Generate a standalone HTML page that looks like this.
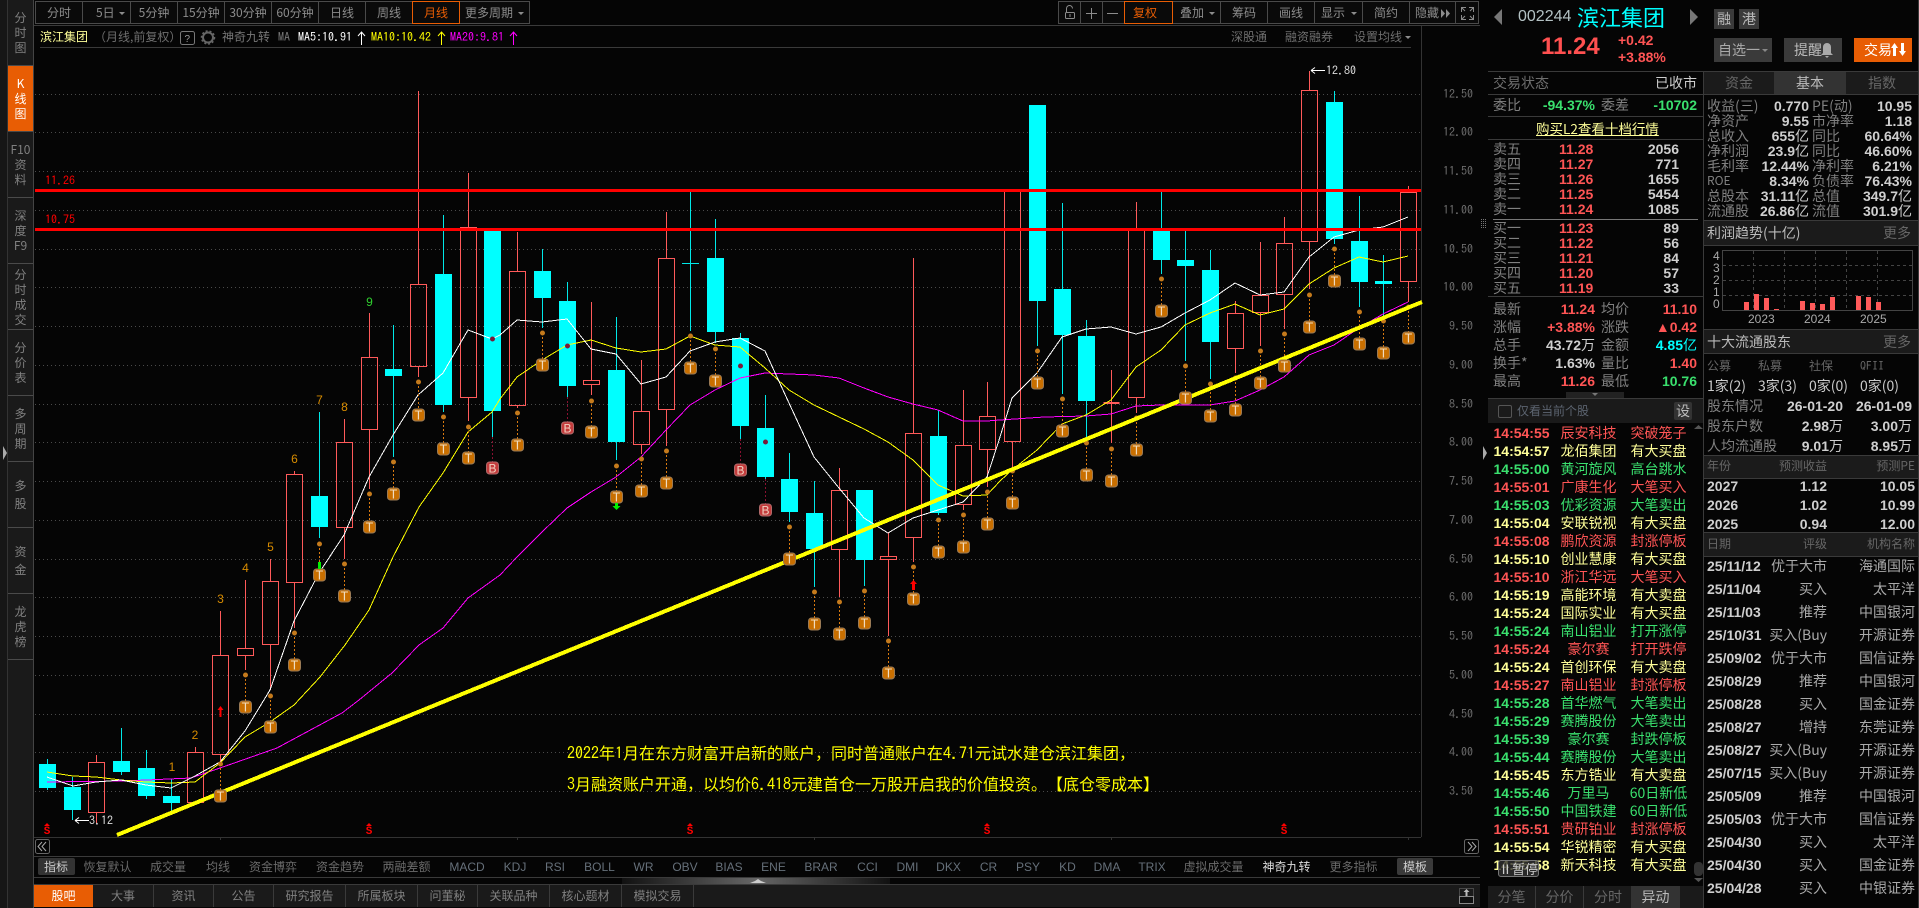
<!DOCTYPE html>
<html lang="zh"><head><meta charset="utf-8"><title>滨江集团</title>
<style>
html,body{margin:0;padding:0;background:#050505;width:1919px;height:908px;overflow:hidden}
body{position:relative;font-family:"WenQuanYi Zen Hei","Noto Sans CJK SC",sans-serif;font-size:14px;color:#808080;text-spacing-trim:space-all}
div{box-sizing:border-box}
.t{position:absolute;height:16px;line-height:16px;white-space:nowrap}
.box{position:absolute}
.b{position:absolute;top:1px;height:23px;border:1px solid #4a4a4a;font-size:12px;line-height:21px;text-align:center;color:#8c8c8c;white-space:nowrap;background:#0a0a0a}
.o{border-color:#e85d04;color:#e85d04}
.h{position:absolute;background:#3a3a3a;height:1px}
.v{position:absolute;background:#3a3a3a;width:1px}
.s{font-size:12px}
.ip{font-family:"IPAGothic","Liberation Mono",monospace}
.n{font-family:"Liberation Sans","WenQuanYi Zen Hei",sans-serif;font-weight:bold;font-size:14px;color:#cfcfcf}
.n i{font-style:normal;font-weight:normal;font-family:"WenQuanYi Zen Hei","Noto Sans CJK SC",sans-serif}
.a{font-family:"IPAGothic","Liberation Mono",monospace;font-size:12px;color:#6e6e6e;right:446px}
.R{color:#ff5555}.Y{color:#ffff99}.G{color:#3ae06e}
.lt{position:absolute;left:8px;width:25px;background:#1a1a1a;border-bottom:1px solid #4a4a4a;text-align:center;font-size:12px;line-height:15px;color:#808080;display:flex;flex-direction:column;justify-content:center}
.sec{position:absolute;left:1704px;width:214px;background:#1b1b1b}
.bt{position:absolute;top:885px;height:22px;background:#1a1a1a;border-right:1px solid #3a3a3a;font-size:12px;line-height:22px;text-align:center;color:#808080}
.id{position:absolute;top:859px;height:16px;line-height:16px;font-size:12px;color:#6a6a6a;transform:translateX(-50%);white-space:nowrap}
.en{font-family:"Liberation Sans",sans-serif;color:#66707a}
.r{position:relative;height:18px;line-height:18px;white-space:nowrap}
.r b{position:absolute;left:5.5px;font:bold 14px/18px "Liberation Sans",sans-serif}
.r span{position:absolute;left:60px;width:81px;text-align:center}
.r em{position:absolute;left:130px;width:81px;text-align:center;font-style:normal}
</style></head><body>

<!-- left strip -->
<div class="box" style="left:0;top:0;width:8px;height:908px;background:#161616;border-right:1px solid #333"></div>
<div class="lt" style="top:0;height:66px">分<br>时<br>图</div>
<div class="lt" style="top:66px;height:66px;background:#e85d04;color:#fff">K<br>线<br>图</div>
<div class="lt" style="top:132px;height:66px">F10<br>资<br>料</div>
<div class="lt" style="top:198px;height:66px">深<br>度<br>F9</div>
<div class="lt" style="top:264px;height:66px">分<br>时<br>成<br>交</div>
<div class="lt" style="top:330px;height:66px">分<br>价<br>表</div>
<div class="lt" style="top:396px;height:66px">多<br>周<br>期</div>
<div class="lt" style="top:462px;height:66px;line-height:18px">多<br>股</div>
<div class="lt" style="top:528px;height:66px;line-height:18px">资<br>金</div>
<div class="lt" style="top:594px;height:66px">龙<br>虎<br>榜</div>
<div class="box" style="left:8px;top:660px;width:25px;height:248px;background:#1a1a1a"></div>
<div class="v" style="left:33px;top:0;height:908px;background:#444"></div>

<!-- top bar -->
<div class="b" style="left:35px;width:48px">分时</div>
<div class="b" style="left:82px;width:49px;text-align:left;padding-left:13px">5日</div>
<div class="b" style="left:130px;width:48px">5分钟</div>
<div class="b" style="left:177px;width:48px">15分钟</div>
<div class="b" style="left:224px;width:48px">30分钟</div>
<div class="b" style="left:271px;width:48px">60分钟</div>
<div class="b" style="left:318px;width:48px">日线</div>
<div class="b" style="left:365px;width:48px">周线</div>
<div class="b o" style="left:412px;width:48px;z-index:2">月线</div>
<div class="b" style="left:459px;width:71px;text-align:left;padding-left:5px">更多周期</div>
<div class="b" style="left:1058px;width:23px"></div>
<div class="b" style="left:1080px;width:23px"></div>
<div class="b" style="left:1102px;width:23px"></div>
<div class="b o" style="left:1124px;width:49px;text-align:left;padding-left:8px;z-index:2">复权</div>
<div class="b" style="left:1172px;width:49px;text-align:left;padding-left:7px">叠加</div>
<div class="b" style="left:1220px;width:48px">筹码</div>
<div class="b" style="left:1267px;width:48px">画线</div>
<div class="b" style="left:1314px;width:49px;text-align:left;padding-left:6px">显示</div>
<div class="b" style="left:1362px;width:48px">简约</div>
<div class="b" style="left:1409px;width:47px;text-align:left;padding-left:5px">隐藏</div>
<div class="b" style="left:1455px;width:24px"></div>
<div class="h" style="left:34px;top:25px;width:1446px"></div>

<!-- title row -->
<div class="t s Y" style="left:40px;top:29px">滨江集团</div>
<div class="t s" style="left:94px;top:29px;color:#6e6e6e">（月线,前复权）</div>
<div class="t s" style="left:222px;top:29px;color:#777">神奇九转</div>
<div class="t s ip" style="left:278px;top:29px;color:#777">MA</div>
<div class="t s ip" style="left:298px;top:29px;color:#fff">MA5:10.91</div>
<div class="t s ip" style="left:371px;top:29px;color:#ff0">MA10:10.42</div>
<div class="t s ip" style="left:450px;top:29px;color:#f0f">MA20:9.81</div>
<div class="t s" style="left:1231px;top:29px;color:#6e6e6e">深股通</div>
<div class="t s" style="left:1285px;top:29px;color:#6e6e6e">融资融券</div>
<div class="t s" style="left:1354px;top:29px;color:#6e6e6e">设置均线</div>
<div class="h" style="left:40px;top:47px;width:1371px"></div>

<!-- chart -->
<svg style="position:absolute;left:0;top:0" width="1919" height="908" viewBox="0 0 1919 908" xmlns="http://www.w3.org/2000/svg">
<defs>
<g id="tb"><rect x="-6" y="-6" width="12" height="12" rx="3" fill="#c96f00" stroke="#9a7a55" stroke-width="1"/></g>
<g id="bb"><rect x="-6" y="-6" width="12" height="12" rx="3" fill="#c43c3c" stroke="#b06a6a" stroke-width="1"/></g>
</defs>
<!-- grid -->
<path fill="none" stroke="#4a4a4a" stroke-width="1" stroke-dasharray="1 3" d="M35 94.5H1421M35 132.5H1421M35 171.5H1421M35 210.5H1421M35 249.5H1421M35 287.5H1421M35 326.5H1421M35 365.5H1421M35 404.5H1421M35 442.5H1421M35 481.5H1421M35 520.5H1421M35 559.5H1421M35 597.5H1421M35 636.5H1421M35 675.5H1421M35 714.5H1421M35 752.5H1421M35 791.5H1421"/>
<path fill="none" stroke="#333" d="M1421.5 26V837M34 837.5H1421M220.5 837v3M517.5 837v3M814.5 837v3M1111.5 837v3M1408.5 837v3"/>
<!-- cyan candles -->
<path stroke="#00e8e8" stroke-width="1" fill="none" d="M47.5 759V790M72.5 777V820M121.5 728V775M146.5 750V799M171.5 779V813M319.5 412V538M393.5 325V457M443.5 215V412M492.5 230V437M542.5 249V328M567.5 282V397M616.5 317V460M690.5 192V331M682 263.5H699M715.5 219V343M740.5 333V439M765.5 395V479M789.5 453V522M814.5 481V587M864.5 490V586M938.5 410V515M1037.5 105V346M1062.5 203V394M1086.5 320V438M1161.5 192V274M1185.5 231V361M1210.5 250V379M1334.5 91V244M1359.5 196V307M1383.5 255V316"/>
<path fill="#00ffff" d="M39 764H56V788H39ZM64 787H81V810H64ZM113 761H130V772H113ZM138 768H155V796H138ZM163 796H180V803H163ZM311 496H328V527H311ZM385 369H402V376H385ZM435 274H452V405H435ZM484 230H501V411H484ZM534 271H551V298H534ZM559 301H576V386H559ZM608 370H625V442H608ZM707 258H724V332H707ZM732 338H749V426H732ZM757 428H774V477H757ZM781 479H798V512H781ZM806 513H823V549H806ZM856 490H873V560H856ZM930 436H947V513H930ZM1029 105H1046V301H1029ZM1054 289H1071V335H1054ZM1078 336H1095V401H1078ZM1153 231H1170V260H1153ZM1177 260H1194V266H1177ZM1202 270H1219V342H1202ZM1326 102H1343V239H1326ZM1351 241H1368V282H1351ZM1375 281H1392V284H1375Z"/>
<!-- red candles -->
<path stroke="#ff5a5a" stroke-width="1" fill="none" d="M96.5 755V762.5M88.5 762.5H104.5V812.5H88.5ZM96.5 812.5V823M195.5 747V752.5M187.5 752.5H203.5V802.5H187.5ZM220.5 611V655.5M212.5 655.5H228.5V754.5H212.5ZM220.5 754.5V762M245.5 580V648.5M237.5 648.5H253.5V655.5H237.5ZM245.5 655.5V670M270.5 559V581.5M262.5 581.5H278.5V644.5H262.5ZM270.5 644.5V690M294.5 471V474.5M286.5 474.5H302.5V582.5H286.5ZM294.5 582.5V628M344.5 419V442.5M336.5 442.5H352.5V527.5H336.5ZM344.5 527.5V559M369.5 313V357.5M361.5 357.5H377.5V429.5H361.5ZM369.5 429.5V489M418.5 91V284.5M410.5 284.5H426.5V366.5H410.5ZM418.5 366.5V377M468.5 173V227.5M460.5 227.5H476.5V397.5H460.5ZM468.5 397.5V421M517.5 232V271.5M509.5 271.5H525.5V405.5H509.5ZM517.5 405.5V408M591.5 302V380.5M583.5 380.5H599.5V384.5H583.5ZM591.5 384.5V395M641.5 360V411.5M633.5 411.5H649.5V444.5H633.5ZM641.5 444.5V454M666.5 212V258.5M658.5 258.5H674.5V409.5H658.5ZM666.5 409.5V446M839.5 468V490.5M831.5 490.5H847.5V549.5H831.5ZM839.5 549.5V597M888.5 532V556.5M880.5 556.5H896.5V559.5H880.5ZM888.5 559.5V636M913.5 258V433.5M905.5 433.5H921.5V537.5H905.5ZM913.5 537.5V562M963.5 390V445.5M955.5 445.5H971.5V504.5H955.5ZM963.5 504.5V510M987.5 382V416.5M979.5 416.5H995.5V449.5H979.5ZM987.5 449.5V487M1004.5 191.5H1020.5V441.5H1004.5ZM1012.5 441.5V468M1103.5 402.5H1119.5M1103.5 403.5H1119.5M1111.5 370V443M1128.5 229.5H1144.5V397.5H1128.5ZM1136.5 202V229.5M1136.5 397.5V413M1235.5 301V313.5M1227.5 313.5H1243.5V348.5H1227.5ZM1235.5 348.5V373M1260.5 242V295.5M1252.5 295.5H1268.5V312.5H1252.5ZM1260.5 312.5V346M1284.5 217V243.5M1276.5 243.5H1292.5V294.5H1276.5ZM1284.5 294.5V329M1309.5 71V90.5M1301.5 90.5H1317.5V241.5H1301.5ZM1309.5 241.5V289M1408.5 186V192.5M1400.5 192.5H1416.5V281.5H1400.5ZM1408.5 281.5V302"/>
<!-- MA -->
<polyline shape-rendering="crispEdges" fill="none" stroke="#f0f" stroke-width="1" points="47,782 124,781 191,778 220,768 277,748 342,713 359,700 392,673 419,645 443,628 468,598 500,575 517,557 542,532 567,508 591,492 616,477 641,457 666,430 690,405 715,390 740,378 765,373 789,374 814,375 839,378 864,388 888,397 913,404 938,410 963,421 987,421 1000,420 1044,417 1086,416 1111,414 1136,406 1161,405 1210,405 1235,401 1260,390 1284,377 1309,355 1334,345 1359,328 1383,314 1408,302"/>
<polyline shape-rendering="crispEdges" fill="none" stroke="#ff0" stroke-width="1" points="47,772 73,776 96,777 121,780 146,782 171,783 195,782 220,763 245,737 270,722 294,705 320,677 345,645 369,610 393,557 419,507 443,473 468,432 492,412 500,399 517,377 542,360 567,345 591,340 616,348 641,352 666,349 690,336 715,345 740,347 765,368 789,390 814,405 839,417 864,429 888,442 913,460 938,485 963,496 987,495 1000,481 1012,470 1037,450 1062,424 1086,415 1111,400 1136,367 1161,350 1185,325 1210,313 1235,304 1260,315 1284,309 1309,284 1334,268 1359,257 1383,262 1408,256"/>
<polyline shape-rendering="crispEdges" fill="none" stroke="#fff" stroke-width="1" points="47,777 73,786 96,782 121,780 146,785 171,788 195,776 220,762 245,731 270,690 294,621 319,573 344,535 369,477 393,435 418,395 443,373 468,330 492,339 500,335 517,320 542,322 567,319 591,349 616,354 641,384 666,377 690,351 715,342 740,338 765,351 789,403 814,457 839,488 864,518 888,533 913,518 938,510 963,502 987,477 1000,437 1012,398 1037,373 1062,337 1086,329 1111,327 1136,334 1161,327 1185,313 1210,300 1235,283 1260,295 1284,292 1309,257 1334,237 1359,230 1383,227 1408,217"/>
<!-- dashes -->
<path fill="none" stroke="#d97a10" stroke-width="1" stroke-dasharray="2 2" d="M220.5 764V796M245.5 675V707M270.5 696V727M294.5 633V665M319.5 544V575M344.5 564V596M369.5 494V527M393.5 462V494M418.5 382V415M443.5 417V449M468.5 427V458M517.5 413V445M542.5 333V365M591.5 401V432M616.5 466V497M641.5 459V491M666.5 451V483M690.5 336V368M715.5 349V381M789.5 527V559M814.5 592V624M839.5 602V634M864.5 591V623M888.5 641V673M913.5 567V599M938.5 520V552M963.5 515V547M987.5 492V524M1012.5 471V503M1037.5 351V383M1062.5 399V431M1086.5 443V475M1111.5 449V481M1136.5 418V450M1161.5 279V311M1185.5 366V398M1210.5 384V416M1235.5 378V410M1260.5 351V383M1284.5 334V366M1309.5 295V327M1334.5 249V281M1359.5 312V344M1383.5 321V353M1408.5 307V338"/>
<path fill="none" stroke="#8a1030" stroke-width="1" stroke-dasharray="2 2" d="M492.5 437V468M567.5 397V428M740.5 439V470M765.5 479V510"/>
<path fill="none" stroke="#c47a1c" stroke-width="5" stroke-linecap="round" d="M220.5 764h0M245.5 675h0M270.5 696h0M294.5 633h0M319.5 544h0M344.5 564h0M369.5 494h0M393.5 462h0M418.5 382h0M443.5 417h0M468.5 427h0M517.5 413h0M542.5 333h0M591.5 401h0M616.5 466h0M641.5 459h0M666.5 451h0M690.5 336h0M715.5 349h0M789.5 527h0M814.5 592h0M839.5 602h0M864.5 591h0M888.5 641h0M913.5 567h0M938.5 520h0M963.5 515h0M987.5 492h0M1012.5 471h0M1037.5 351h0M1062.5 399h0M1086.5 443h0M1111.5 449h0M1136.5 418h0M1161.5 279h0M1185.5 366h0M1210.5 384h0M1235.5 378h0M1260.5 351h0M1284.5 334h0M1309.5 295h0M1334.5 249h0M1359.5 312h0M1383.5 321h0M1408.5 307h0"/>
<path fill="none" stroke="#7a1a3a" stroke-width="5" stroke-linecap="round" d="M492.5 339h0M567.5 346h0M740.5 366h0M765.5 442h0"/>
<!-- trend -->
<line shape-rendering="crispEdges" x1="117" y1="835" x2="1422" y2="302" stroke="#ff0" stroke-width="4"/>
<!-- badges -->
<g>
<use href="#tb" x="220.5" y="796"/><use href="#tb" x="245.5" y="707"/><use href="#tb" x="270.5" y="727"/><use href="#tb" x="294.5" y="665"/><use href="#tb" x="319.5" y="575"/><use href="#tb" x="344.5" y="596"/><use href="#tb" x="369.5" y="527"/><use href="#tb" x="393.5" y="494"/><use href="#tb" x="418.5" y="415"/><use href="#tb" x="443.5" y="449"/><use href="#tb" x="468.5" y="458"/><use href="#tb" x="517.5" y="445"/><use href="#tb" x="542.5" y="365"/><use href="#tb" x="591.5" y="432"/><use href="#tb" x="616.5" y="497"/><use href="#tb" x="641.5" y="491"/><use href="#tb" x="666.5" y="483"/><use href="#tb" x="690.5" y="368"/><use href="#tb" x="715.5" y="381"/><use href="#tb" x="789.5" y="559"/><use href="#tb" x="814.5" y="624"/><use href="#tb" x="839.5" y="634"/><use href="#tb" x="864.5" y="623"/><use href="#tb" x="888.5" y="673"/><use href="#tb" x="913.5" y="599"/><use href="#tb" x="938.5" y="552"/><use href="#tb" x="963.5" y="547"/><use href="#tb" x="987.5" y="524"/><use href="#tb" x="1012.5" y="503"/><use href="#tb" x="1037.5" y="383"/><use href="#tb" x="1062.5" y="431"/><use href="#tb" x="1086.5" y="475"/><use href="#tb" x="1111.5" y="481"/><use href="#tb" x="1136.5" y="450"/><use href="#tb" x="1161.5" y="311"/><use href="#tb" x="1185.5" y="398"/><use href="#tb" x="1210.5" y="416"/><use href="#tb" x="1235.5" y="410"/><use href="#tb" x="1260.5" y="383"/><use href="#tb" x="1284.5" y="366"/><use href="#tb" x="1309.5" y="327"/><use href="#tb" x="1334.5" y="281"/><use href="#tb" x="1359.5" y="344"/><use href="#tb" x="1383.5" y="353"/><use href="#tb" x="1408.5" y="338"/>
<use href="#bb" x="492.5" y="468"/><use href="#bb" x="567.5" y="428"/><use href="#bb" x="740.5" y="470"/><use href="#bb" x="765.5" y="510"/>
</g>
<text transform="translate(0 .5)" font-family="Liberation Sans,sans-serif" font-size="12.5" fill="#f0dcc0" text-anchor="middle" x="220.5 245.5 270.5 294.5 319.5 344.5 369.5 393.5 418.5 443.5 468.5 517.5 542.5 591.5 616.5 641.5 666.5 690.5 715.5 789.5 814.5 839.5 864.5 888.5 913.5 938.5 963.5 987.5 1012.5 1037.5 1062.5 1086.5 1111.5 1136.5 1161.5 1185.5 1210.5 1235.5 1260.5 1284.5 1309.5 1334.5 1359.5 1383.5 1408.5" y="800 711 731 669 579 600 531 498 419 453 462 449 369 436 501 495 487 372 385 563 628 638 627 677 603 556 551 528 507 387 435 479 485 454 315 402 420 414 387 370 331 285 348 357 342">TTTTTTTTTTTTTTTTTTTTTTTTTTTTTTTTTTTTTTTTTTTTT</text>
<text transform="translate(0 .5)" font-family="Liberation Sans,sans-serif" font-size="12" fill="#f0d0c0" text-anchor="middle" x="492.5 567.5 740.5 765.5" y="472 432 474 514">BBBB</text>
<!-- arrows -->
<path fill="#f00" d="M220.5 706l-3 4h2v7h2v-7h2zM913.5 580l-3.5 4h2v6h3v-6h2z"/>
<path fill="#0e0" d="M318 562h3v7h-3zM615 503h3v3h2.5l-4 4-4-4h2.5z"/>
<!-- red levels -->
<rect x="35" y="189" width="1386" height="3" fill="#f00"/>
<rect x="35" y="228" width="1386" height="3" fill="#f00"/>
<!-- s marks -->
<path fill="#f00" d="M47 823l-3 3h6zM369 823l-3 3h6zM690 823l-3 3h6zM987 823l-3 3h6zM1284 823l-3 3h6z"/>
<g font-family="Liberation Mono,monospace" font-size="11" font-weight="bold" fill="#f00" text-anchor="middle">
<text x="47" y="834">S</text><text x="369" y="834">S</text><text x="690" y="834">S</text><text x="987" y="834">S</text><text x="1284" y="834">S</text>
</g>
<!-- count labels -->
<g font-family="Liberation Sans,sans-serif" font-size="12" fill="#d88c00" text-anchor="middle">
<text x="172" y="771">1</text><text x="195" y="739">2</text><text x="220.5" y="603">3</text><text x="245.5" y="572">4</text><text x="270.5" y="551">5</text><text x="294.5" y="463">6</text><text x="319.5" y="404">7</text><text x="344.5" y="411">8</text><text x="369.5" y="306" fill="#2fd02f">9</text>
</g>
<!-- high low marks -->
<path fill="none" stroke="#fff" d="M1311 70.5H1325M1311 70.5l4-3M1311 70.5l4 3M75 820.5H89M75 820.5l4-3M75 820.5l4 3"/>
<text font-family="IPAGothic,monospace" font-size="12" fill="#ddd" x="1326" y="74.5">12.80</text>
<text font-family="IPAGothic,monospace" font-size="12" fill="#ddd" x="89" y="824.5">3.12</text>
<text font-family="IPAGothic,monospace" font-size="12" fill="#f00" x="45" y="184.5">11.26</text>
<text font-family="IPAGothic,monospace" font-size="12" fill="#f00" x="45" y="223.5">10.75</text>
<!-- MA arrows -->
<path fill="none" stroke="#fff" d="M361.5 32V45M358 36l3.5-4 3.5 4"/>
<path fill="none" stroke="#ff0" d="M441.5 32V45M438 36l3.5-4 3.5 4"/>
<path fill="none" stroke="#f0f" d="M513.5 32V45M510 36l3.5-4 3.5 4"/>
<!-- question + gear -->
<rect x="180.5" y="31.5" width="14" height="13" rx="2" fill="none" stroke="#777"/>
<text font-family="Liberation Sans,sans-serif" font-size="10" fill="#999" x="184.5" y="42">?</text>
<circle cx="208" cy="37.5" r="5" fill="none" stroke="#666" stroke-width="2"/><circle cx="208" cy="37.5" r="6.5" fill="none" stroke="#666" stroke-width="1.5" stroke-dasharray="2 2"/>
<!-- toolbar icons -->
<g fill="none" stroke="#8c8c8c">
<rect x="1065.5" y="12.5" width="9" height="6" rx="1"/><path d="M1066.5 12V8.5a3 3 0 0 1 6 0M1070 14v3"/>
<path d="M1091.5 8V19M1086 13.5H1097M1107 13.5H1118"/>
<path d="M1461.5 12V7.5H1466M1469 7.5H1473.5V12M1461.5 15V19.5H1466M1469 19.5H1473.5V15M1462 8l3 3M1473 8l-3 3M1462 19l3-3M1473 19l-3-3"/>
</g>
<path fill="#8c8c8c" d="M1441 9l4 4.5-4 4.5zM1446 9l4 4.5-4 4.5zM119 12h6l-3 3zM518 12h6l-3 3zM1405 36h6l-3 3z"/>
<path fill="#e85d04" d="M1161 12h6l-3 3z"/>
<path fill="#8c8c8c" d="M1209 12h6l-3 3zM1351 12h6l-3 3z"/>
<!-- side handles -->
<path fill="#aaa" d="M3 446l4 7-4 7zM1483 446l4 7-4 7z"/>
<path stroke="#777" stroke-width="1" stroke-dasharray="1 1" d="M1481.5 219v10M1483.5 219v10M1485.5 219v10"/>
<!-- bottom nav -->
<rect x="35.5" y="839.5" width="14" height="14" rx="2" fill="none" stroke="#666"/>
<path fill="none" stroke="#aaa" d="M42 842l-4 4.5 4 4.5M46 842l-4 4.5 4 4.5"/>
<rect x="1464.5" y="839.5" width="14" height="14" rx="2" fill="none" stroke="#666"/>
<path fill="none" stroke="#aaa" d="M1468 842l4 4.5-4 4.5M1472 842l4 4.5-4 4.5"/>
<!-- scroll + corner -->
<defs><linearGradient id="g" x1="0" x2="1"><stop offset="0" stop-color="#111"/><stop offset=".5" stop-color="#666"/><stop offset="1" stop-color="#111"/></linearGradient></defs>
<rect x="622" y="878" width="268" height="6" fill="url(#g)"/>
<path fill="#ccc" d="M750 883l5-2 3-2 3 2 5 2z"/>
<!-- profit chart -->
<rect x="1722.5" y="250.5" width="190" height="60" fill="none" stroke="#444"/>
<path fill="none" stroke="#444" stroke-dasharray="3 3" d="M1723 265.5H1912M1723 280.5H1912M1723 295.5H1912M1753.5 251V310M1784.5 251V310M1815.5 251V310M1846.5 251V310M1877.5 251V310"/>
<path fill="#ff5a5a" d="M1744 302h5v8h-5zM1754 294h5v16h-5zM1764 298h5v12h-5zM1774 309h5v1h-5zM1800 301h5v9h-5zM1810 303h5v7h-5zM1820 304h5v6h-5zM1830 297h5v13h-5zM1856 296h5v14h-5zM1866 297h5v13h-5zM1876 302h5v8h-5z"/>
<!-- header arrows -->
<path fill="#777" d="M1502 9v16l-8-8zM1690 9v16l8-8z"/>
<path fill="#555" d="M1694 429h9l-4.5-4zM1694 878h9l-4.5 4z"/>
<path fill="#777" d="M1593 393h6l-3 2.5z"/>
</svg>

<!-- corner icon -->
<div class="box" style="left:34px;top:885px;width:1446px;height:22px;background:#1a1a1a"></div>
<svg style="position:absolute;left:1459px;top:887px" width="16" height="18"><rect x=".5" y="1.5" width="14" height="15" fill="none" stroke="#777" stroke-dasharray="1 1"/><rect x=".5" y="9.5" width="14" height="7" fill="#111" stroke="#888"/><path fill="#bbb" d="M7.500 2l-3 3h2v4h2v-4h2z"/></svg>

<!-- axis labels -->
<div class="t a" style="top:86px">12.50</div><div class="t a" style="top:124px">12.00</div><div class="t a" style="top:163px">11.50</div><div class="t a" style="top:202px">11.00</div><div class="t a" style="top:241px">10.50</div><div class="t a" style="top:279px">10.00</div><div class="t a" style="top:318px">9.50</div><div class="t a" style="top:357px">9.00</div><div class="t a" style="top:396px">8.50</div><div class="t a" style="top:434px">8.00</div><div class="t a" style="top:473px">7.50</div><div class="t a" style="top:512px">7.00</div><div class="t a" style="top:551px">6.50</div><div class="t a" style="top:589px">6.00</div><div class="t a" style="top:628px">5.50</div><div class="t a" style="top:667px">5.00</div><div class="t a" style="top:706px">4.50</div><div class="t a" style="top:744px">4.00</div><div class="t a" style="top:783px">3.50</div>

<!-- annotations -->
<div class="t" style="left:567px;top:744px;font-size:16px;color:#ff0"><span class="ip">2022</span>年<span class="ip">1</span>月在东方财富开启新的账户，同时普通账户在<span class="ip">4.71</span>元试水建仓滨江集团，</div>
<div class="t" style="left:567px;top:775px;font-size:16px;color:#ff0"><span class="ip">3</span>月融资账户开通，以均价<span class="ip">6.418</span>元建首仓一万股开启我的价值投资。【底仓零成本】</div>

<!-- bottom rows -->
<div class="h" style="left:34px;top:856px;width:1446px"></div>
<div class="h" style="left:34px;top:877px;width:1446px"></div>
<div class="h" style="left:34px;top:884px;width:1446px"></div>
<div class="box" style="left:38px;top:858px;width:37px;height:17px;background:#333;border-radius:2px"></div>
<div class="id" style="left:56px;color:#ccc">指标</div>
<div class="id" style="left:107.5px">恢复默认</div><div class="id" style="left:168px">成交量</div><div class="id Y" style="left:218px">均线</div><div class="id" style="left:273px">资金博弈</div><div class="id" style="left:340px">资金趋势</div><div class="id" style="left:406.5px">两融差额</div>
<div class="id en" style="left:467px">MACD</div><div class="id en" style="left:515px">KDJ</div><div class="id en" style="left:555px">RSI</div><div class="id en" style="left:599.5px">BOLL</div><div class="id en" style="left:643.5px">WR</div><div class="id en" style="left:685px">OBV</div><div class="id en" style="left:729px">BIAS</div><div class="id en" style="left:773.5px">ENE</div><div class="id en" style="left:821px">BRAR</div><div class="id en" style="left:867.5px">CCI</div><div class="id en" style="left:907.5px">DMI</div><div class="id en" style="left:948.5px">DKX</div><div class="id en" style="left:988.5px">CR</div><div class="id en" style="left:1028px">PSY</div><div class="id en" style="left:1067.5px">KD</div><div class="id en" style="left:1107px">DMA</div><div class="id en" style="left:1152px">TRIX</div>
<div class="id" style="left:1213.5px">虚拟成交量</div><div class="id" style="left:1286.5px;color:#ddd">神奇九转</div><div class="id" style="left:1353.5px">更多指标</div>
<div class="box" style="left:1397px;top:858px;width:36px;height:17px;background:#3a3a3a;border-radius:2px"></div>
<div class="id" style="left:1415px;color:#ccc">模板</div>

<div class="bt" style="left:34px;width:59px;background:#e85d04;color:#fff;border:0">股吧</div>
<div class="bt" style="left:93px;width:61px">大事</div><div class="bt" style="left:154px;width:60px">资讯</div><div class="bt" style="left:214px;width:60px">公告</div><div class="bt" style="left:274px;width:72px">研究报告</div><div class="bt" style="left:346px;width:72px">所属板块</div><div class="bt" style="left:418px;width:60px">问董秘</div><div class="bt" style="left:478px;width:72px">关联品种</div><div class="bt" style="left:550px;width:72px">核心题材</div><div class="bt" style="left:622px;width:72px">模拟交易</div>

<!-- right strip -->
<div class="box" style="left:1480px;top:0;width:8px;height:908px;background:#161616;border-left:1px solid #333;border-right:1px solid #444;z-index:-1"></div>

<!-- header -->
<div class="t" style="left:1518px;top:9px;font:16px/16px 'Liberation Sans',sans-serif;color:#b4c2c4">002244</div>
<div class="t" style="left:1577px;top:3px;height:28px;line-height:28px;font-size:22px;color:#0ff">滨江集团</div>
<div class="box" style="left:1714px;top:9px;width:20px;height:20px;background:#3a3a3a;color:#bbb;text-align:center;line-height:20px">融</div>
<div class="box" style="left:1739px;top:9px;width:20px;height:20px;background:#3a3a3a;color:#bbb;text-align:center;line-height:20px">港</div>
<div class="t n R" style="left:1541px;top:33px;height:28px;font-size:24px;line-height:28px;color:#ff5050">11.24</div>
<div class="t n" style="left:1618px;top:32px;color:#ff5555">+0.42</div>
<div class="t n" style="left:1618px;top:49px;color:#ff5555">+3.88%</div>
<div class="box" style="left:1714px;top:38px;width:58px;height:24px;background:#3a3a3a;color:#aaa;line-height:24px;padding-left:4px">自选一</div>
<div class="box" style="left:1784px;top:38px;width:58px;height:24px;background:#3a3a3a;color:#bbb;line-height:24px;padding-left:10px">提醒</div>
<div class="box" style="left:1854px;top:38px;width:58px;height:24px;background:#e85d04;color:#fff;line-height:24px;padding-left:10px">交易</div>
<svg style="position:absolute;left:1854px;top:38px" width="58" height="24"><path fill="#fff" d="M39 18h3v-8h2l-3.5-5-3.5 5h2zM47 5h3v8h2l-3.5 5-3.500-5h2z"/></svg>
<svg style="position:absolute;left:1784px;top:38px" width="58" height="24"><path fill="#aaa" d="M43 5a4 4 0 0 1 4 4v6l2 2h-12l2-2v-6a4 4 0 0 1 4-4zM41 18h4l-2 2z"/></svg>
<svg style="position:absolute;left:1714px;top:38px" width="58" height="24"><path fill="#888" d="M48 11h6l-3 3z"/></svg>

<div class="h" style="left:1488px;top:71px;width:431px"></div>
<div class="v" style="left:1703px;top:71px;height:837px"></div>
<div class="v" style="left:1918px;top:0;height:908px"></div>

<!-- quote -->
<div class="t" style="left:1493px;top:75px;color:#6e6e6e">交易状态</div><div class="t" style="right:222px;top:75px;color:#ccc">已收市</div>
<div class="h" style="left:1488px;top:94px;width:215px"></div>
<div class="t" style="left:1493px;top:97px">委比</div><div class="t n" style="right:324px;top:97px;color:#3ae06e">-94.37%</div><div class="t" style="left:1601px;top:97px">委差</div><div class="t n" style="right:222px;top:97px;color:#3ae06e">-10702</div>
<div class="h" style="left:1488px;top:116px;width:215px"></div>
<div class="t Y" style="left:1536px;top:120px;text-decoration:underline;font-size:13.5px">购买L2查看十档行情</div>
<div class="h" style="left:1488px;top:139px;width:215px"></div>

<div class="t" style="left:1493px;top:141px">卖五</div><div class="t n" style="left:1559px;top:141px;color:#ff5555">11.28</div><div class="t n" style="right:240px;top:141px">2056</div>
<div class="t" style="left:1493px;top:156px">卖四</div><div class="t n" style="left:1559px;top:156px;color:#ff5555">11.27</div><div class="t n" style="right:240px;top:156px">771</div>
<div class="t" style="left:1493px;top:171px">卖三</div><div class="t n" style="left:1559px;top:171px;color:#ff5555">11.26</div><div class="t n" style="right:240px;top:171px">1655</div>
<div class="t" style="left:1493px;top:186px">卖二</div><div class="t n" style="left:1559px;top:186px;color:#ff5555">11.25</div><div class="t n" style="right:240px;top:186px">5454</div>
<div class="t" style="left:1493px;top:201px">卖一</div><div class="t n" style="left:1559px;top:201px;color:#ff5555">11.24</div><div class="t n" style="right:240px;top:201px">1085</div>
<div class="h" style="left:1493px;top:219px;width:205px;background:#777"></div>
<div class="t" style="left:1493px;top:220px">买一</div><div class="t n" style="left:1559px;top:220px;color:#ff5555">11.23</div><div class="t n" style="right:240px;top:220px">89</div>
<div class="t" style="left:1493px;top:235px">买二</div><div class="t n" style="left:1559px;top:235px;color:#ff5555">11.22</div><div class="t n" style="right:240px;top:235px">56</div>
<div class="t" style="left:1493px;top:250px">买三</div><div class="t n" style="left:1559px;top:250px;color:#ff5555">11.21</div><div class="t n" style="right:240px;top:250px">84</div>
<div class="t" style="left:1493px;top:265px">买四</div><div class="t n" style="left:1559px;top:265px;color:#ff5555">11.20</div><div class="t n" style="right:240px;top:265px">57</div>
<div class="t" style="left:1493px;top:280px">买五</div><div class="t n" style="left:1559px;top:280px;color:#ff5555">11.19</div><div class="t n" style="right:240px;top:280px">33</div>
<div class="h" style="left:1488px;top:296px;width:215px"></div>

<div class="t" style="left:1493px;top:301px">最新</div><div class="t n" style="right:324px;top:301px;color:#ff5555">11.24</div><div class="t" style="left:1601px;top:301px">均价</div><div class="t n" style="right:222px;top:301px;color:#ff5555">11.10</div>
<div class="t" style="left:1493px;top:319px">涨幅</div><div class="t n" style="right:324px;top:319px;color:#ff5555">+3.88%</div><div class="t" style="left:1601px;top:319px">涨跌</div><div class="t n" style="right:222px;top:319px;color:#ff5555">▲0.42</div>
<div class="t" style="left:1493px;top:337px">总手</div><div class="t n" style="right:324px;top:337px">43.72<i>万</i></div><div class="t" style="left:1601px;top:337px">金额</div><div class="t n" style="right:222px;top:337px;color:#0ff">4.85<i>亿</i></div>
<div class="t" style="left:1493px;top:355px">换手*</div><div class="t n" style="right:324px;top:355px">1.63%</div><div class="t" style="left:1601px;top:355px">量比</div><div class="t n" style="right:222px;top:355px;color:#ff5555">1.40</div>
<div class="t" style="left:1493px;top:373px">最高</div><div class="t n" style="right:324px;top:373px;color:#ff5555">11.26</div><div class="t" style="left:1601px;top:373px">最低</div><div class="t n" style="right:222px;top:373px;color:#3ae06e">10.76</div>
<div class="box" style="left:1566px;top:392px;width:58px;height:6px;background:#222"></div>
<svg style="position:absolute;left:1566px;top:392px" width="58" height="6"><path fill="#777" d="M26 1h6l-3 3z"/></svg>
<div class="h" style="left:1488px;top:398px;width:215px"></div>

<div class="box" style="left:1488px;top:399px;width:215px;height:24px;background:#1a1a1a"></div>
<div class="box" style="left:1498px;top:405px;width:14px;height:13px;border:1px solid #555;border-radius:2px"></div>
<div class="t" style="left:1517px;top:403px;color:#5c6470;font-size:12px">仅看当前个股</div>
<div class="box" style="left:1674px;top:402px;width:18px;height:18px;background:#333;color:#bbb;text-align:center;line-height:18px;border-radius:2px">设</div>

<!-- ticker -->
<div class="box" style="left:1488px;top:424px;width:206px;height:450px;overflow:hidden">
<div class="r R"><b>14:54:55</b><span>辰安科技</span><em>突破笼子</em></div>
<div class="r Y"><b>14:54:57</b><span>龙佰集团</span><em>有大买盘</em></div>
<div class="r G"><b>14:55:00</b><span>黄河旋风</span><em>高台跳水</em></div>
<div class="r R"><b>14:55:01</b><span>广康生化</span><em>大笔买入</em></div>
<div class="r G"><b>14:55:03</b><span>优彩资源</span><em>大笔卖出</em></div>
<div class="r Y"><b>14:55:04</b><span>安联锐视</span><em>有大买盘</em></div>
<div class="r R"><b>14:55:08</b><span>鹏欣资源</span><em>封涨停板</em></div>
<div class="r Y"><b>14:55:10</b><span>创业慧康</span><em>有大买盘</em></div>
<div class="r R"><b>14:55:10</b><span>浙江华远</span><em>大笔买入</em></div>
<div class="r Y"><b>14:55:19</b><span>高能环境</span><em>有大卖盘</em></div>
<div class="r Y"><b>14:55:24</b><span>国际实业</span><em>有大买盘</em></div>
<div class="r G"><b>14:55:24</b><span>南山铝业</span><em>打开涨停</em></div>
<div class="r R"><b>14:55:24</b><span>豪尔赛</span><em>打开跌停</em></div>
<div class="r Y"><b>14:55:24</b><span>首创环保</span><em>有大卖盘</em></div>
<div class="r R"><b>14:55:27</b><span>南山铝业</span><em>封涨停板</em></div>
<div class="r G"><b>14:55:28</b><span>首华燃气</span><em>大笔卖出</em></div>
<div class="r G"><b>14:55:29</b><span>赛腾股份</span><em>大笔卖出</em></div>
<div class="r G"><b>14:55:39</b><span>豪尔赛</span><em>封跌停板</em></div>
<div class="r G"><b>14:55:44</b><span>赛腾股份</span><em>大笔卖出</em></div>
<div class="r Y"><b>14:55:45</b><span>东方锆业</span><em>有大卖盘</em></div>
<div class="r G"><b>14:55:46</b><span>万里马</span><em>60日新低</em></div>
<div class="r G"><b>14:55:50</b><span>中国铁建</span><em>60日新低</em></div>
<div class="r R"><b>14:55:51</b><span>贵研铂业</span><em>封涨停板</em></div>
<div class="r Y"><b>14:55:54</b><span>华锐精密</span><em>有大买盘</em></div>
<div class="r Y"><b>14:55:58</b><span>新天科技</span><em>有大买盘</em></div>
</div>
<div class="box" style="left:1498px;top:860px;width:41px;height:17px;background:rgba(50,50,50,.8);border:1px solid #777;border-radius:3px;color:#ccc;font-size:13px;line-height:15px;text-align:center">Ⅱ暂停</div>
<div class="box" style="left:1694px;top:862px;width:9px;height:14px;background:#333;border-radius:4px"></div>

<div class="box" style="left:1488px;top:886px;width:215px;height:22px;background:#1a1a1a"></div>
<div class="box" style="left:1488px;top:886px;width:48px;height:22px;border-right:1px solid #3a3a3a;text-align:center;line-height:22px;color:#666">分笔</div>
<div class="box" style="left:1536px;top:886px;width:48px;height:22px;border-right:1px solid #3a3a3a;text-align:center;line-height:22px;color:#666">分价</div>
<div class="box" style="left:1584px;top:886px;width:48px;height:22px;text-align:center;line-height:22px;color:#666">分时</div>
<div class="box" style="left:1631px;top:886px;width:49px;height:22px;background:#333;text-align:center;line-height:22px;color:#bbb">异动</div>

<!-- right column -->
<div class="sec" style="top:72px;height:22px"></div>
<div class="box" style="left:1704px;top:72px;width:70px;height:22px;text-align:center;line-height:22px;color:#666">资金</div>
<div class="box" style="left:1774px;top:72px;width:72px;height:22px;background:#333;text-align:center;line-height:22px;color:#bbb">基本</div>
<div class="box" style="left:1846px;top:72px;width:72px;height:22px;text-align:center;line-height:22px;color:#666">指数</div>
<div class="h" style="left:1704px;top:94px;width:214px"></div>

<div class="t" style="left:1707px;top:98px">收益(三)</div><div class="t n" style="right:110px;top:98px">0.770</div><div class="t" style="left:1812px;top:98px">PE(动)</div><div class="t n" style="right:7px;top:98px">10.95</div>
<div class="t" style="left:1707px;top:113px">净资产</div><div class="t n" style="right:110px;top:113px">9.55</div><div class="t" style="left:1812px;top:113px">市净率</div><div class="t n" style="right:7px;top:113px">1.18</div>
<div class="t" style="left:1707px;top:128px">总收入</div><div class="t n" style="right:110px;top:128px">655<i>亿</i></div><div class="t" style="left:1812px;top:128px">同比</div><div class="t n" style="right:7px;top:128px">60.64%</div>
<div class="t" style="left:1707px;top:143px">净利润</div><div class="t n" style="right:110px;top:143px">23.9<i>亿</i></div><div class="t" style="left:1812px;top:143px">同比</div><div class="t n" style="right:7px;top:143px">46.60%</div>
<div class="t" style="left:1707px;top:158px">毛利率</div><div class="t n" style="right:110px;top:158px">12.44%</div><div class="t" style="left:1812px;top:158px">净利率</div><div class="t n" style="right:7px;top:158px">6.21%</div>
<div class="t" style="left:1707px;top:173px;font-size:12px">ROE</div><div class="t n" style="right:110px;top:173px">8.34%</div><div class="t" style="left:1812px;top:173px">负债率</div><div class="t n" style="right:7px;top:173px">76.43%</div>
<div class="t" style="left:1707px;top:188px">总股本</div><div class="t n" style="right:110px;top:188px">31.11<i>亿</i></div><div class="t" style="left:1812px;top:188px">总值</div><div class="t n" style="right:7px;top:188px">349.7<i>亿</i></div>
<div class="t" style="left:1707px;top:203px">流通股</div><div class="t n" style="right:110px;top:203px">26.86<i>亿</i></div><div class="t" style="left:1812px;top:203px">流值</div><div class="t n" style="right:7px;top:203px">301.9<i>亿</i></div>
<div class="h" style="left:1704px;top:220px;width:214px"></div>

<div class="sec" style="top:221px;height:24px"></div>
<div class="t" style="left:1707px;top:225px;color:#bbb">利润趋势(十亿)</div><div class="t" style="right:8px;top:225px;color:#666">更多</div>
<div class="h" style="left:1704px;top:245px;width:214px"></div>
<div class="t n" style="left:1713px;top:248px;font-weight:normal;font-size:12px;color:#aaa">4</div>
<div class="t n" style="left:1713px;top:260px;font-weight:normal;font-size:12px;color:#aaa">3</div>
<div class="t n" style="left:1713px;top:272px;font-weight:normal;font-size:12px;color:#aaa">2</div>
<div class="t n" style="left:1713px;top:284px;font-weight:normal;font-size:12px;color:#aaa">1</div>
<div class="t n" style="left:1713px;top:296px;font-weight:normal;font-size:12px;color:#aaa">0</div>
<div class="t n" style="left:1748px;top:311px;font-weight:normal;font-size:12px;color:#aaa">2023</div>
<div class="t n" style="left:1804px;top:311px;font-weight:normal;font-size:12px;color:#aaa">2024</div>
<div class="t n" style="left:1860px;top:311px;font-weight:normal;font-size:12px;color:#aaa">2025</div>
<div class="h" style="left:1704px;top:329px;width:214px"></div>

<div class="sec" style="top:330px;height:23px"></div>
<div class="t" style="left:1707px;top:334px;color:#bbb">十大流通股东</div><div class="t" style="right:8px;top:334px;color:#666">更多</div>
<div class="h" style="left:1704px;top:353px;width:214px"></div>
<div class="t s" style="left:1707px;top:358px;color:#666">公募</div><div class="t s" style="left:1758px;top:358px;color:#666">私募</div><div class="t s" style="left:1809px;top:358px;color:#666">社保</div><div class="t s ip" style="left:1860px;top:358px;color:#666">QFII</div>
<div class="t" style="left:1707px;top:378px;color:#ccc">1家(2)</div><div class="t" style="left:1758px;top:378px;color:#ccc">3家(3)</div><div class="t" style="left:1809px;top:378px;color:#ccc">0家(0)</div><div class="t" style="left:1860px;top:378px;color:#ccc">0家(0)</div>
<div class="t" style="left:1707px;top:398px">股东情况</div><div class="t n" style="right:76px;top:398px">26-01-20</div><div class="t n" style="right:7px;top:398px">26-01-09</div>
<div class="t" style="left:1707px;top:418px">股东户数</div><div class="t n" style="right:76px;top:418px">2.98<i>万</i></div><div class="t n" style="right:7px;top:418px">3.00<i>万</i></div>
<div class="t" style="left:1707px;top:438px">人均流通股</div><div class="t n" style="right:76px;top:438px">9.01<i>万</i></div><div class="t n" style="right:7px;top:438px">8.95<i>万</i></div>
<div class="h" style="left:1704px;top:455px;width:214px"></div>

<div class="sec" style="top:456px;height:22px"></div>
<div class="t s" style="left:1707px;top:458px;color:#666">年份</div><div class="t s" style="right:92px;top:458px;color:#666">预测收益</div><div class="t s" style="right:4px;top:458px;color:#666">预测PE</div>
<div class="h" style="left:1704px;top:478px;width:214px"></div>
<div class="t n" style="left:1707px;top:478px">2027</div><div class="t n" style="right:92px;top:478px">1.12</div><div class="t n" style="right:4px;top:478px">10.05</div>
<div class="t n" style="left:1707px;top:497px">2026</div><div class="t n" style="right:92px;top:497px">1.02</div><div class="t n" style="right:4px;top:497px">10.99</div>
<div class="t n" style="left:1707px;top:516px">2025</div><div class="t n" style="right:92px;top:516px">0.94</div><div class="t n" style="right:4px;top:516px">12.00</div>
<div class="h" style="left:1704px;top:532px;width:214px"></div>

<div class="sec" style="top:533px;height:23px"></div>
<div class="t s" style="left:1707px;top:536px;color:#666">日期</div><div class="t s" style="right:92px;top:536px;color:#666">评级</div><div class="t s" style="right:4px;top:536px;color:#666">机构名称</div>
<div class="h" style="left:1704px;top:556px;width:214px"></div>

<div class="t n" style="left:1707px;top:558px">25/11/12</div><div class="t" style="right:92px;top:558px;color:#aaa">优于大市</div><div class="t" style="right:4px;top:558px;color:#aaa">海通国际</div>
<div class="t n" style="left:1707px;top:581px">25/11/04</div><div class="t" style="right:92px;top:581px;color:#aaa">买入</div><div class="t" style="right:4px;top:581px;color:#aaa">太平洋</div>
<div class="t n" style="left:1707px;top:604px">25/11/03</div><div class="t" style="right:92px;top:604px;color:#aaa">推荐</div><div class="t" style="right:4px;top:604px;color:#aaa">中国银河</div>
<div class="t n" style="left:1707px;top:627px">25/10/31</div><div class="t" style="right:92px;top:627px;color:#aaa">买入(Buy</div><div class="t" style="right:4px;top:627px;color:#aaa">开源证券</div>
<div class="t n" style="left:1707px;top:650px">25/09/02</div><div class="t" style="right:92px;top:650px;color:#aaa">优于大市</div><div class="t" style="right:4px;top:650px;color:#aaa">国信证券</div>
<div class="t n" style="left:1707px;top:673px">25/08/29</div><div class="t" style="right:92px;top:673px;color:#aaa">推荐</div><div class="t" style="right:4px;top:673px;color:#aaa">中国银河</div>
<div class="t n" style="left:1707px;top:696px">25/08/28</div><div class="t" style="right:92px;top:696px;color:#aaa">买入</div><div class="t" style="right:4px;top:696px;color:#aaa">国金证券</div>
<div class="t n" style="left:1707px;top:719px">25/08/27</div><div class="t" style="right:92px;top:719px;color:#aaa">增持</div><div class="t" style="right:4px;top:719px;color:#aaa">东莞证券</div>
<div class="t n" style="left:1707px;top:742px">25/08/27</div><div class="t" style="right:92px;top:742px;color:#aaa">买入(Buy</div><div class="t" style="right:4px;top:742px;color:#aaa">开源证券</div>
<div class="t n" style="left:1707px;top:765px">25/07/15</div><div class="t" style="right:92px;top:765px;color:#aaa">买入(Buy</div><div class="t" style="right:4px;top:765px;color:#aaa">开源证券</div>
<div class="t n" style="left:1707px;top:788px">25/05/09</div><div class="t" style="right:92px;top:788px;color:#aaa">推荐</div><div class="t" style="right:4px;top:788px;color:#aaa">中国银河</div>
<div class="t n" style="left:1707px;top:811px">25/05/03</div><div class="t" style="right:92px;top:811px;color:#aaa">优于大市</div><div class="t" style="right:4px;top:811px;color:#aaa">国信证券</div>
<div class="t n" style="left:1707px;top:834px">25/04/30</div><div class="t" style="right:92px;top:834px;color:#aaa">买入</div><div class="t" style="right:4px;top:834px;color:#aaa">太平洋</div>
<div class="t n" style="left:1707px;top:857px">25/04/30</div><div class="t" style="right:92px;top:857px;color:#aaa">买入</div><div class="t" style="right:4px;top:857px;color:#aaa">国金证券</div>
<div class="t n" style="left:1707px;top:880px">25/04/28</div><div class="t" style="right:92px;top:880px;color:#aaa">买入</div><div class="t" style="right:4px;top:880px;color:#aaa">中银证券</div>
</body></html>
